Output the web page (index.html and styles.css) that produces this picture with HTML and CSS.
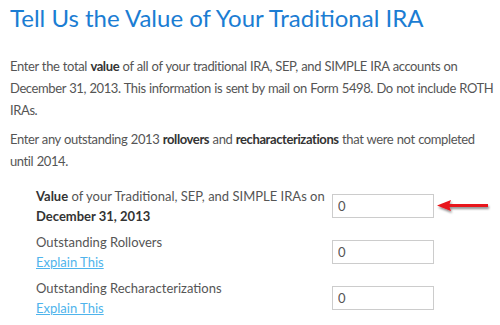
FILE: index.html
```html
<!DOCTYPE html>
<html lang="en">
<head>
  <meta charset="UTF-8">
  <title>Traditional IRA Value</title>
  <link rel="stylesheet" href="styles.css">
</head>
<body>
  <!-- Heading -->
  <h1 class="page-title">Tell Us the Value of Your Traditional IRA</h1>

  <!-- Intro text -->
  <p class="intro">Enter the total <b>value</b> of all of your traditional IRA, SEP, and SIMPLE IRA accounts on December 31, 2013. This information is sent by mail on Form 5498. Do not include ROTH IRAs.</p>
  <p class="intro">Enter any outstanding 2013 <b>rollovers</b> and <b>recharacterizations</b> that were not completed until 2014.</p>

  <!-- Form rows -->
  <div class="form">
    <div class="form-row">
      <label class="field-label"><b>Value</b> of your Traditional, SEP, and SIMPLE IRAs on <b>December 31, 2013</b></label>
      <div class="field">
        <input class="amount" type="text" value="0">
        <svg class="arrow" width="56" height="16" viewBox="0 0 56 16">
          <defs>
            <filter id="shadow" x="-20%" y="-50%" width="140%" height="200%">
              <feDropShadow dx="1" dy="2" stdDeviation="1.2" flood-color="#000" flood-opacity="0.45"/>
            </filter>
          </defs>
          <g filter="url(#shadow)">
            <rect x="12" y="5" width="40" height="3" fill="#e8141b"/>
            <polygon points="1,6.5 15,1 13,6.5 15,12" fill="#e8141b"/>
          </g>
        </svg>
      </div>
    </div>
    <div class="form-row">
      <div class="field-label">
        <div>Outstanding Rollovers</div>
        <a href="#" class="explain">Explain This</a>
      </div>
      <div class="field">
        <input class="amount" type="text" value="0">
      </div>
    </div>
    <div class="form-row">
      <div class="field-label">
        <div>Outstanding Recharacterizations</div>
        <a href="#" class="explain">Explain This</a>
      </div>
      <div class="field">
        <input class="amount" type="text" value="0">
      </div>
    </div>
  </div>
</body>
</html>
```

FILE: styles.css
```css
/* General Reset */
* {
  margin: 0;
  padding: 0;
  box-sizing: border-box;
}

body {
  font-family: Lato, "Open Sans", sans-serif;
  background: #fff;
  color: #555;
  font-size: 13px;
  line-height: 22px;
  padding: 5px 2px 0 10px;
  overflow: hidden;
}

/* Heading */
.page-title {
  font-size: 24px;
  font-weight: 400;
  color: #1b7dd3;
  line-height: 26px;
  margin-bottom: 24px;
}

.intro {
  margin-bottom: 7px;
  letter-spacing: -0.4px;
  word-spacing: 0.5px;
}

.intro b {
  color: #333;
}

/* Form */
.form {
  padding-left: 26px;
  padding-top: 7px;
}

.form-row {
  display: grid;
  grid-template-columns: 296px 1fr;
  height: 46px;
}

.field-label {
  line-height: 20px;
}

.field-label b {
  color: #333;
}

.field {
  display: flex;
  align-items: center;
  height: 24px;
  margin-top: 8px;
}

.amount {
  width: 102px;
  height: 24px;
  border: 1px solid #ccc;
  font-family: Lato, sans-serif;
  font-size: 13px;
  color: #555;
  padding: 0 5px;
  outline: none;
}

.arrow {
  margin-left: 2px;
  margin-top: 2px;
}

.explain {
  color: #4fb4ec;
  text-decoration: underline;
}
```
